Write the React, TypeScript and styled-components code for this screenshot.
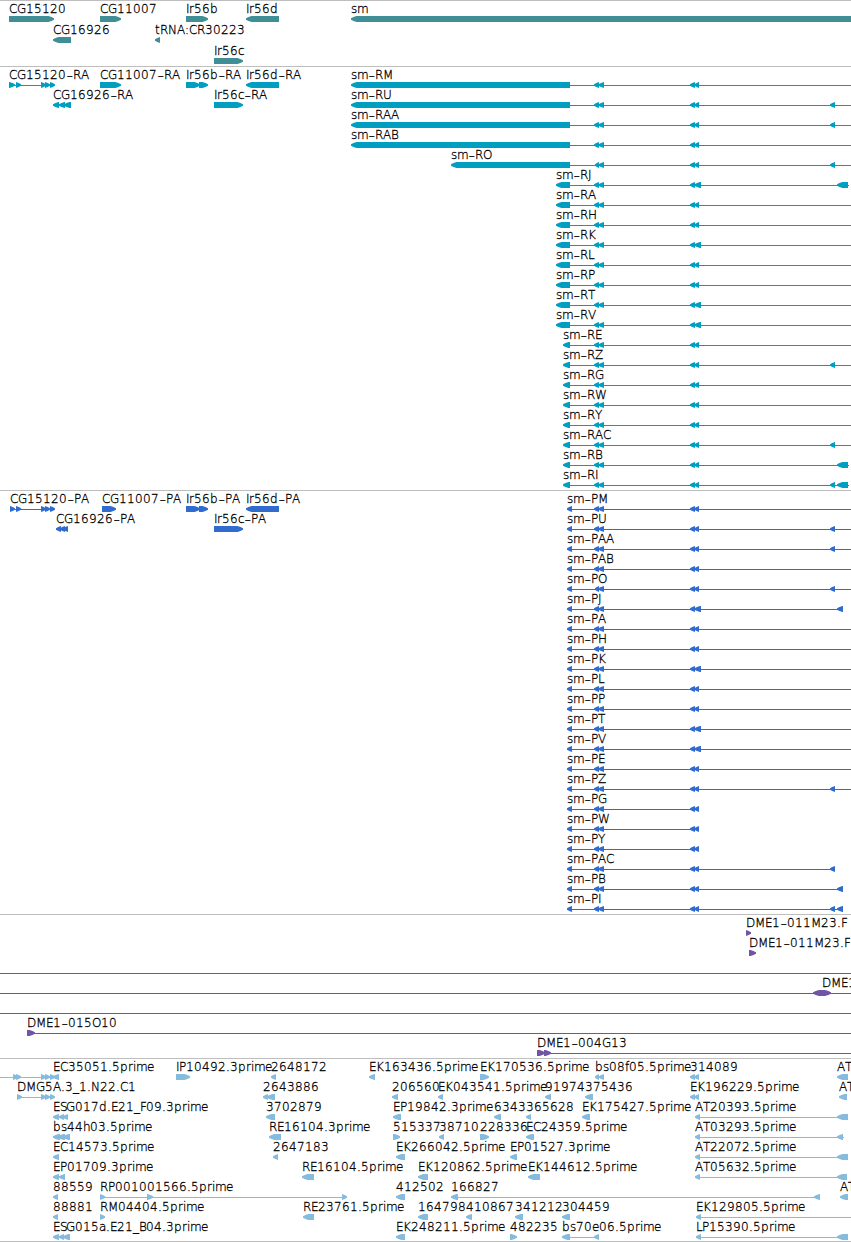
import React from "react";
import styled, { createGlobalStyle } from "styled-components";

type Strand = "f" | "r" | "both";
type Span = [number, number];

interface Feature {
  name?: string;
  strand: Strand;
  spans: Span[];
  line?: Span;
  labelX?: number;
}

const WIDTH = 851;
const EDGE = 852;

const GlobalStyle = createGlobalStyle`
  html, body { margin: 0; padding: 0; background: #fff; }
`;

const Browser = styled.main`
  width: ${WIDTH}px;
  height: 1242px;
  box-sizing: border-box;
  display: flex;
  flex-direction: column;
  overflow: hidden;
  background: #fff;
  border-bottom: 1px solid #bebebe;
`;

const TrackPanel = styled.section<{ $gap: number; $color: string }>`
  display: flex;
  flex-direction: column;
  border-top: 1px solid #bebebe;
  padding-bottom: ${(p) => p.$gap}px;
  color: ${(p) => p.$color};
`;

const Lane = styled.svg<{ $height: number }>`
  display: block;
  flex: none;
  width: ${WIDTH}px;
  height: ${(p) => p.$height}px;
  overflow: visible;
`;

const Shape = styled.polygon`
  fill: currentColor;
`;

const Intron = styled.rect`
  fill: currentColor;
  shape-rendering: crispEdges;
`;

const Label = styled.text`
  fill: #000;
  stroke: #000;
  stroke-width: 0.3px;
  font-family: "DejaVu Sans", "DejaVu Sans Light", sans-serif;
  font-weight: 200;
  font-size: 12px;
  white-space: pre;
`;

const Dash = styled.tspan`
  font-size: 18px;
`;

/* Whole-pixel advance widths of the label face. */
const ADVANCE: Record<string, number> = {
  A: 8, B: 7, C: 8, D: 9, E: 7, F: 6, G: 9, H: 9, I: 3, J: 4, K: 8, L: 6, M: 10,
  N: 9, O: 9, P: 7, R: 8, S: 6, T: 7, U: 8, V: 7, W: 10, Y: 7, Z: 7,
  a: 7, b: 8, c: 6, d: 8, e: 7, f: 4, h: 7, i: 3, m: 11, p: 8, r: 5, s: 6, t: 5,
  ".": 4, ":": 4, "-": 7, _: 6,
};

const advance = (text: string) => Array.from(text).reduce((sum, ch) => sum + (ADVANCE[ch] ?? 8), 0);

function glyphPositions(text: string, start: number): string {
  return Array.from(text)
    .map((_, i) => start + advance(text.slice(0, i)))
    .join(" ");
}

const BASELINE = 12;

/* The dash of a name is drawn wider than the face's own hyphen. */
const FeatureLabel = ({ name, x }: { name: string; x: number }) => {
  const [head, tail] = name.split("-");
  const dashX = x + advance(head);
  return (
    <Label>
      <tspan x={glyphPositions(head, x)} y={BASELINE}>{head}</tspan>
      {tail && <Dash x={dashX + 0.5} y={BASELINE + 2}>-</Dash>}
      {tail && <tspan x={glyphPositions(tail, dashX + 7)} y={BASELINE}>{tail}</tspan>}
    </Label>
  );
};

const TOP = 15;
const BOTTOM = 21;
const MID = 18;

function outline([a, b]: Span, strand: Strand): string {
  const head = Math.min(strand === "both" ? 6 : 5.5, b - a);
  const mirror = (x: number) => (strand === "f" ? a + b - x : x);
  const tip: [number, number][] = [
    [a + head, TOP],
    [a + head * 0.45, MID - 2],
    [a, MID - 0.7],
    [a, MID + 0.7],
    [a + head * 0.45, MID + 2],
    [a + head, BOTTOM],
  ];
  const tail: [number, number][] =
    strand === "both"
      ? tip.map(([x, y]): [number, number] => [a + b - x, y]).reverse()
      : [[b, BOTTOM], [b, TOP]];
  return [...tip, ...tail].map(([x, y]) => `${mirror(x)},${y}`).join(" ");
}

const FeatureLane = ({ features, height }: { features: Feature[]; height: number }) => (
  <Lane $height={height} viewBox={`0 0 ${WIDTH} ${height}`}>
    {features.map((f, i) => (
      <g key={i}>
        {f.line && <Intron x={f.line[0]} y={MID} width={f.line[1] - f.line[0]} height={1} />}
        {f.spans.map((s, j) => (
          <Shape key={j} points={outline(s, f.strand)} />
        ))}
        {f.name && <FeatureLabel name={f.name} x={f.labelX ?? f.spans[0][0]} />}
      </g>
    ))}
  </Lane>
);

interface TrackProps {
  color: string;
  lanes: Feature[][];
  laneHeight?: number;
  gap?: number;
}

const Track = ({ color, lanes, laneHeight = 20, gap = 3 }: TrackProps) => (
  <TrackPanel $color={color} $gap={gap}>
    {lanes.map((lane, i) => (
      <FeatureLane key={i} features={lane} height={laneHeight} />
    ))}
  </TrackPanel>
);

const fwd = (name: string | undefined, spans: Span[], line?: Span): Feature => ({ name, strand: "f", spans, line });
const rev = (name: string | undefined, spans: Span[], line?: Span): Feature => ({ name, strand: "r", spans, line });

const genes: Feature[][] = [
  [
    fwd("CG15120", [[9, 54]]),
    fwd("CG11007", [[100, 121]]),
    fwd("Ir56b", [[186, 208]]),
    rev("Ir56d", [[246, 279]]),
    rev("sm", [[351, EDGE]]),
  ],
  [rev("CG16926", [[53, 71]]), rev("tRNA:CR30223", [[155, 160]])],
  [fwd("Ir56c", [[214, 243]])],
];

/* Exon groups shared by the isoforms of sm. */
interface Isoform {
  name: string;
  first: Span;
  shortPair?: boolean;
  wide?: boolean;
  mid?: boolean;
  last?: Span;
  end?: number;
}

const isoform = (o: Isoform): Feature => {
  const spans: Span[] = [
    o.first,
    [o.shortPair ? 595 : 594, 599],
    [598.5, 604],
    [690, 695],
    [694.5, o.wide ? 701 : 699],
  ];
  if (o.mid) spans.push([830, 835]);
  if (o.last) spans.push(o.last);
  return rev(o.name, spans, [o.first[1], o.end ?? EDGE]);
};

const LONG: Span = [351, 570];
const MEDIUM: Span = [556, 570];
const SHORT: Span = [563, 570];
const LAST: Span = [837, 848];

const transcriptIsoforms: Isoform[] = [
  { name: "sm-RM", first: LONG },
  { name: "sm-RU", first: LONG, mid: true },
  { name: "sm-RAA", first: LONG, mid: true },
  { name: "sm-RAB", first: LONG },
  { name: "sm-RO", first: [451, 570], shortPair: true, mid: true },
  { name: "sm-RJ", first: MEDIUM, wide: true, last: LAST, end: 849 },
  { name: "sm-RA", first: MEDIUM },
  { name: "sm-RH", first: MEDIUM },
  { name: "sm-RK", first: MEDIUM, wide: true },
  { name: "sm-RL", first: MEDIUM },
  { name: "sm-RP", first: MEDIUM },
  { name: "sm-RT", first: MEDIUM, wide: true },
  { name: "sm-RV", first: MEDIUM, wide: true },
  { name: "sm-RE", first: SHORT },
  { name: "sm-RZ", first: SHORT, mid: true },
  { name: "sm-RG", first: SHORT },
  { name: "sm-RW", first: SHORT },
  { name: "sm-RY", first: SHORT },
  { name: "sm-RAC", first: SHORT, mid: true },
  { name: "sm-RB", first: SHORT, last: LAST, end: 849 },
  { name: "sm-RI", first: SHORT, mid: true, last: LAST, end: 849 },
];

const CODING: Span = [567, 572];
const CODING_LAST: Span = [837, 843];

const codingIsoforms: Isoform[] = [
  { name: "sm-PM", first: CODING },
  { name: "sm-PU", first: CODING, mid: true },
  { name: "sm-PAA", first: CODING, mid: true },
  { name: "sm-PAB", first: CODING },
  { name: "sm-PO", first: CODING, shortPair: true, mid: true },
  { name: "sm-PJ", first: CODING, wide: true, last: CODING_LAST, end: 843 },
  { name: "sm-PA", first: CODING },
  { name: "sm-PH", first: CODING },
  { name: "sm-PK", first: CODING, wide: true },
  { name: "sm-PL", first: CODING },
  { name: "sm-PP", first: CODING },
  { name: "sm-PT", first: CODING, wide: true },
  { name: "sm-PV", first: CODING, wide: true },
  { name: "sm-PE", first: CODING },
  { name: "sm-PZ", first: CODING, mid: true },
  { name: "sm-PG", first: CODING, end: 699 },
  { name: "sm-PW", first: CODING, end: 699 },
  { name: "sm-PY", first: CODING, end: 699 },
  { name: "sm-PAC", first: CODING, mid: true, end: 835 },
  { name: "sm-PB", first: CODING, last: CODING_LAST, end: 843 },
  { name: "sm-PI", first: CODING, mid: true, last: CODING_LAST, end: 843 },
];

const withNeighbours = (isoforms: Isoform[], neighbours: Feature[][]): Feature[][] =>
  isoforms.map((o, i) => [...(neighbours[i] ?? []), isoform(o)]);

const transcripts = withNeighbours(transcriptIsoforms, [
  [
    fwd("CG15120-RA", [[9, 15], [16, 21], [41, 46], [45, 50], [50, 55]], [15, 50]),
    fwd("CG11007-RA", [[100, 121]]),
    fwd("Ir56b-RA", [[186, 200], [199, 208]]),
    rev("Ir56d-RA", [[246, 279]]),
  ],
  [rev("CG16926-RA", [[53, 59], [59, 65], [64, 71]], [57, 66]), fwd("Ir56c-RA", [[214, 243]])],
]);

const coding = withNeighbours(codingIsoforms, [
  [
    fwd("CG15120-PA", [[10, 15], [16, 21], [41, 46], [45, 50], [50, 55]], [15, 50]),
    fwd("CG11007-PA", [[102, 116]]),
    fwd("Ir56b-PA", [[186, 200], [199, 208]]),
    rev("Ir56d-PA", [[246, 279]]),
  ],
  [rev("CG16926-PA", [[56, 61], [60, 65], [63, 68]]), fwd("Ir56c-PA", [[214, 243]])],
]);

const clones: Feature[][] = [
  [fwd("DME1-011M23.F", [[746, 751]])],
  [fwd("DME1-011M23.F", [[749, 756]])],
  [fwd(undefined, [], [0, EDGE])],
  [{ name: "DME1", strand: "both", spans: [[813, 831]], line: [0, EDGE], labelX: 822 }],
  [fwd(undefined, [], [0, EDGE])],
  [fwd("DME1-015O10", [[27, 35]], [27, EDGE])],
  [fwd("DME1-004G13", [[537, 545], [544, 551]], [537, EDGE])],
];

const reads: Feature[][] = [
  [
    fwd(undefined, [[13, 18], [16, 21], [41, 46], [45, 50], [50, 55]], [0, 50]),
    rev("EC35051.5prime", [[53, 59]]),
    fwd("IP10492.3prime", [[176, 190]]),
    rev("2648172", [[271, 276]]),
    rev("EK163436.5prime", [[369, 375]]),
    fwd("EK170536.5prime", [[480, 489]]),
    rev("bs08f05.5prime", [[595, 599], [599, 604]]),
    rev("314089", [[690, 695], [694.5, 699]]),
    rev("AT", [[837, 848]]),
  ],
  [
    fwd("DMG5A.3_1.N22.C1", [[17, 22], [41, 46], [45, 50], [50, 55]], [17, 50]),
    rev("2643886", [[263, 268], [267, 275]]),
    rev("206560", [[392, 398]]),
    rev("EK043541.5prime", [[438, 443]]),
    rev("91974", [[545, 551]]),
    rev("375436", [[585, 593]]),
    rev("EK196229.5prime", [[690, 695], [694.5, 699]]),
    rev("AT", [[839, 847]]),
  ],
  [
    rev("ESG017d.E21_F09.3prime", [[53, 59], [59, 64], [63, 68]]),
    rev("3702879", [[266, 275]]),
    rev("EP19842.3prime", [[393, 401]]),
    rev("6343", [[494, 501]]),
    rev("365628", [[526, 531]]),
    rev("EK175427.5prime", [[582, 590]]),
    rev("AT20393.5prime", [[695, 700], [837, 848]], [700, 848]),
  ],
  [
    rev("bs44h03.5prime", [[53, 60], [58, 65], [63, 70]]),
    rev("RE16104.3prime", [[269, 281]]),
    fwd("515337", [[393, 400]]),
    rev("38710", [[439, 444]]),
    fwd("228336", [[480, 489]]),
    rev("EC24359.5prime", [[526, 534]]),
    rev("AT03293.5prime", [[695, 700], [837, 843]], [700, 844]),
  ],
  [
    rev("EC14573.5prime", [[53, 59]]),
    rev("2647183", [[273, 278]]),
    rev("EK266042.5prime", [[396, 405]]),
    rev("EP01527.3prime", [[510, 517]]),
    rev("AT22072.5prime", [[695, 700], [837, 848]], [700, 848]),
  ],
  [
    rev("EP01709.3prime", [[53, 59], [59, 65]]),
    rev("RE16104.5prime", [[302, 314]]),
    rev("EK120862.5prime", [[418, 428]]),
    rev("EK144612.5prime", [[528, 540]]),
    rev("AT05632.5prime", [[695, 700], [837, 847]], [700, 847]),
  ],
  [
    rev("88559", [[53, 58]]),
    fwd("RP001001566.5prime", [[100, 105], [147, 153], [342, 347]], [100, 345]),
    rev("412502", [[396, 405]]),
    rev("166827", [[451, 458], [814, 820]], [458, 816]),
    rev("AT", [[840, 848]]),
  ],
  [
    rev("88881", [[53, 58]]),
    fwd("RM04404.5prime", [[100, 105]]),
    rev("RE23761.5prime", [[303, 314]]),
    rev("164798", [[418, 428]]),
    rev("410867", [[466, 472]]),
    rev("341212", [[515, 523]]),
    rev("304459", [[562, 570]]),
    rev("EK129805.5prime", [[696, 701]], [701, EDGE]),
  ],
  [
    rev("ESG015a.E21_B04.3prime", [[53, 59], [59, 64], [63, 70]]),
    rev("EK248211.5prime", [[396, 405]]),
    fwd("482235", [[510, 517]]),
    rev("bs70e06.5prime", [[562, 570], [594, 599]], [570, 595]),
    rev("LP15390.5prime", [[696, 701], [837, 848]], [701, 848]),
  ],
];

export default function App() {
  return (
    <>
      <GlobalStyle />
      <Browser>
        <Track color="#408f96" lanes={genes} laneHeight={21} gap={2} />
        <Track color="#009fc1" lanes={transcripts} />
        <Track color="#316bce" lanes={coding} />
        <Track color="#7154a6" lanes={clones} />
        <Track color="#85bbdd" lanes={reads} gap={2} />
      </Browser>
    </>
  );
}
